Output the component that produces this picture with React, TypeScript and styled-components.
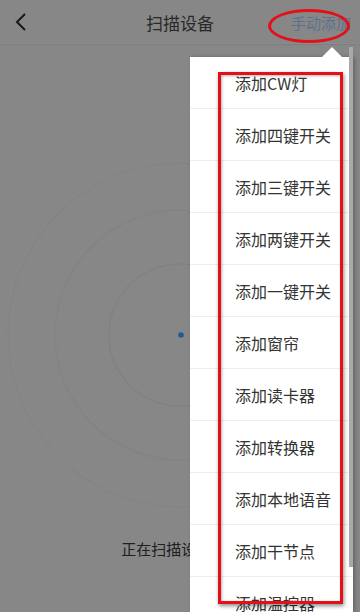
import {FC} from "react";
import styled, {createGlobalStyle} from "styled-components";

const GlobalStyle = createGlobalStyle`
    html, body {
        margin: 0;
        padding: 0;
        width: 360px;
        height: 612px;
        overflow: hidden;
        font-family: "Noto Sans CJK SC", "Noto Sans", sans-serif;
    }
    * {
        box-sizing: border-box;
    }
`;

const menuItems = [
    "添加CW灯",
    "添加四键开关",
    "添加三键开关",
    "添加两键开关",
    "添加一键开关",
    "添加窗帘",
    "添加读卡器",
    "添加转换器",
    "添加本地语音",
    "添加干节点",
    "添加温控器",
];

const Screen = styled.div`
    position: relative;
    width: 360px;
    height: 612px;
    background: #f6f6f6;
    overflow: hidden;
    display: flex;
    flex-direction: column;
`;

const Header = styled.header`
    height: 44px;
    flex-shrink: 0;
    display: grid;
    grid-template-columns: 80px 1fr 80px;
    align-items: center;
    border-bottom: 1px solid #ffffff;
    box-shadow: 0 1px 0 #e6e6e6;
`;

const BackButton = styled.button`
    background: none;
    border: none;
    padding: 0 0 0 14px;
    height: 44px;
    display: flex;
    align-items: center;
`;

const Title = styled.h1`
    margin: 0;
    text-align: center;
    font-size: 17px;
    font-weight: 400;
    color: #4a4a4a;
`;

const ManualAdd = styled.span`
    font-size: 15px;
    color: #a8d0ff;
    white-space: nowrap;
    padding-left: 11px;
`;

const ScanArea = styled.main`
    flex: 1;
    display: flex;
    flex-direction: column;
    align-items: center;
    padding-top: 118px;
`;

const Radar = styled.svg`
    width: 360px;
    height: 346px;
    margin-left: -4px;
`;

const ScanText = styled.p`
    margin: 30px 0 0;
    font-size: 15px;
    color: #3a3a3a;
`;

const Backdrop = styled.div`
    position: absolute;
    inset: 0;
    background: rgba(0, 0, 0, 0.45);
`;

const Menu = styled.div`
    position: absolute;
    top: 57px;
    left: 190px;
    width: 163px;
    bottom: 0;
    background: #ffffff;
    box-shadow: 2px 0 4px rgba(0, 0, 0, 0.25);
    &::before {
        content: "";
        position: absolute;
        top: -10px;
        left: 132px;
        border-left: 10px solid transparent;
        border-right: 10px solid transparent;
        border-bottom: 10px solid #ffffff;
    }
`;

const MenuList = styled.ul`
    list-style: none;
    margin: 0;
    padding: 0;
    height: 100%;
    overflow: hidden;
`;

const MenuItem = styled.li`
    height: 52px;
    display: flex;
    align-items: center;
    padding-left: 45px;
    font-size: 16px;
    color: #333333;
    border-bottom: 1px solid #eeeeee;
`;

const ScrollThumb = styled.div`
    position: absolute;
    top: -10px;
    right: 0;
    width: 4px;
    height: 520px;
    background: #a9a9a9;
`;

const RedEllipse = styled.div`
    position: absolute;
    left: 268px;
    top: 9px;
    width: 82px;
    height: 34px;
    border: 3px solid #e3101a;
    border-radius: 50%;
`;

const RedBox = styled.div`
    position: absolute;
    left: 218px;
    top: 72px;
    width: 125px;
    height: 532px;
    border: 3px solid #e3101a;
    box-shadow: 1px 2px 4px rgba(0, 0, 0, 0.45), inset 1px 1px 3px rgba(0, 0, 0, 0.3);
`;

const BackIcon: FC = () => (
    <svg width="14" height="20" viewBox="0 0 14 20">
        <path d="M11 2 L3 10 L11 18" fill="none" stroke="#2e2e2e" strokeWidth="2" />
    </svg>
);

export default function App() {
    return (
        <>
            <GlobalStyle />
            <Screen>
                <Header>
                    <BackButton>
                        <BackIcon />
                    </BackButton>
                    <Title>扫描设备</Title>
                    <ManualAdd>手动添加</ManualAdd>
                </Header>
                <ScanArea>
                    <Radar viewBox="0 0 360 346">
                        <circle cx="182" cy="173" r="71" fill="none" stroke="#ececec" strokeWidth="1.5" />
                        <circle cx="182" cy="173" r="125" fill="none" stroke="#eeeeee" strokeWidth="1.5" />
                        <circle cx="182" cy="173" r="172" fill="none" stroke="#f0f0f0" strokeWidth="1.5" />
                        <circle cx="183" cy="173" r="2.8" fill="#3aa6ff" />
                    </Radar>
                    <ScanText>正在扫描设备中...</ScanText>
                </ScanArea>
                <Backdrop />
                <Menu>
                    <MenuList>
                        {menuItems.map((item) => (
                            <MenuItem key={item}>{item}</MenuItem>
                        ))}
                    </MenuList>
                    <ScrollThumb />
                </Menu>
                <RedEllipse />
                <RedBox />
            </Screen>
        </>
    );
}
